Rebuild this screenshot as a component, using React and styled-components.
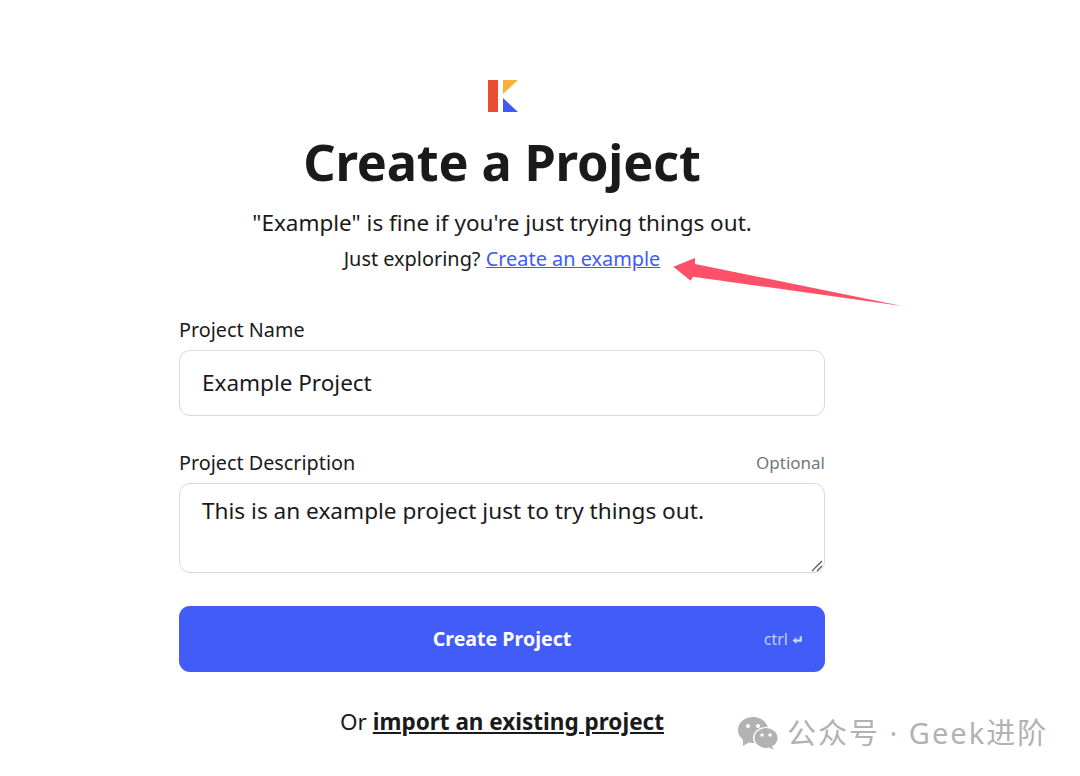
import React from "react";
import styled, { createGlobalStyle } from "styled-components";

const Global = createGlobalStyle`
  html, body { margin: 0; padding: 0; background: #fff; }
  body { font-family: "Noto Sans", "Open Sans", sans-serif; color: #1a1a1a; }
`;

const Page = styled.main`
  position: relative;
  width: 1080px;
  height: 776px;
  overflow: hidden;
  padding: 79px 0 0 179px;
  box-sizing: border-box;
`;

const Column = styled.div`
  width: 646px;
  display: flex;
  flex-direction: column;
`;

const Header = styled.header`
  display: flex;
  flex-direction: column;
  align-items: center;
`;

const Logo = styled.svg`
  display: block;
  width: 32px;
  height: 34px;
`;

const Title = styled.h1`
  margin: 15px 0 0;
  font-size: 50.5px;
  line-height: 68px;
  font-weight: 700;
  letter-spacing: -0.2px;
  color: #1a1a1a;
`;

const Subtitle = styled.p`
  margin: 12px 0 0;
  font-size: 22.5px;
  line-height: 30px;
`;

const Hint = styled.p`
  margin: 8px 0 0;
  font-size: 19.9px;
  line-height: 26px;
`;

const HintLink = styled.a`
  color: #3f5bf6;
  text-decoration: underline;
`;

const Field = styled.div`
  display: flex;
  flex-direction: column;
  margin-top: ${(p) => p.$top}px;
`;

const LabelRow = styled.div`
  display: flex;
  justify-content: space-between;
  align-items: flex-start;
  height: 26px;
  margin-bottom: 7px;
`;

const Label = styled.label`
  font-size: 19.8px;
  line-height: 26px;
`;

const Optional = styled.span`
  font-size: 17px;
  line-height: 26px;
  color: #6f7780;
`;

const Input = styled.input`
  box-sizing: border-box;
  width: 646px;
  height: 66px;
  padding: 0 22px 2px;
  border: 1px solid #d9d9d9;
  border-radius: 11px;
  font: 400 22.5px "Noto Sans", sans-serif;
  color: #1a1a1a;
  background: #fff;
  outline: none;
`;

const AreaWrap = styled.div`
  position: relative;
  height: 90px;
`;

const TextArea = styled.textarea`
  display: block;
  box-sizing: border-box;
  width: 646px;
  height: 90px;
  padding: 12px 22px;
  border: 1px solid #d9d9d9;
  border-radius: 11px;
  font: 400 22.6px/30px "Noto Sans", sans-serif;
  color: #1a1a1a;
  background: #fff;
  outline: none;
  resize: none;
`;

const Grip = styled.svg`
  position: absolute;
  right: 1px;
  bottom: 1px;
  width: 13px;
  height: 13px;
`;

const Submit = styled.button`
  position: relative;
  display: flex;
  align-items: center;
  justify-content: center;
  width: 646px;
  height: 66px;
  margin-top: 33px;
  padding: 0 0 2px;
  border: 0;
  border-radius: 11px;
  background: #415cf7;
  color: #fff;
  font: 700 19.6px "Noto Sans", sans-serif;
`;

const Shortcut = styled.span`
  position: absolute;
  right: 22px;
  top: 50%;
  transform: translateY(-50%);
  display: flex;
  align-items: center;
  gap: 4px;
  font-size: 16px;
  font-weight: 400;
  color: #c4cdfc;
`;

const Footer = styled.p`
  margin: 35px 0 0;
  text-align: center;
  font-size: 22.5px;
  line-height: 30px;
`;

const FooterLink = styled.a`
  font-weight: 700;
  color: #1a1a1a;
  text-decoration: underline;
`;

const Arrow = styled.svg`
  position: absolute;
  left: 670px;
  top: 255px;
  width: 235px;
  height: 55px;
`;

const Watermark = styled.div`
  position: absolute;
  left: 737px;
  top: 715px;
  display: flex;
  align-items: center;
  gap: 8px;
  font-family: "Noto Sans", "Noto Sans CJK SC", sans-serif;
  font-size: 29px;
  line-height: 36px;
  letter-spacing: 2px;
  color: #b2b2b2;
  white-space: nowrap;
`;

const Wechat = () => (
  <svg width="42" height="34" viewBox="0 0 42 34">
    <ellipse cx="16" cy="14" rx="15" ry="13" fill="#b2b2b2" />
    <path d="M6 22 L6 30 L14 25 Z" fill="#b2b2b2" />
    <circle cx="11" cy="10" r="2" fill="#fff" />
    <circle cx="21" cy="10" r="2" fill="#fff" />
    <ellipse cx="29" cy="22" rx="13" ry="11" fill="#fff" />
    <ellipse cx="29" cy="22" rx="11.5" ry="10" fill="#b2b2b2" />
    <path d="M34 29 L37 34 L31 31 Z" fill="#b2b2b2" />
    <circle cx="25" cy="19" r="1.7" fill="#fff" />
    <circle cx="33" cy="19" r="1.7" fill="#fff" />
  </svg>
);

export default function App() {
  return (
    <>
      <Global />
      <Page>
        <Column>
          <Header>
            <Logo viewBox="0 0 32 34">
              <rect x="2" y="1" width="10" height="32" fill="#e84e2f" />
              <path d="M17 1 H32 L17 15 Z" fill="#fbb03b" />
              <path d="M17 19 L32 33 H17 Z" fill="#3f5bf6" />
            </Logo>
            <Title>Create a Project</Title>
            <Subtitle>"Example" is fine if you're just trying things out.</Subtitle>
            <Hint>
              Just exploring? <HintLink href="#">Create an example</HintLink>
            </Hint>
          </Header>
          <Field $top={45}>
            <LabelRow>
              <Label>Project Name</Label>
            </LabelRow>
            <Input defaultValue="Example Project" />
          </Field>
          <Field $top={34}>
            <LabelRow>
              <Label>Project Description</Label>
              <Optional>Optional</Optional>
            </LabelRow>
            <AreaWrap>
              <TextArea defaultValue="This is an example project just to try things out." />
              <Grip viewBox="0 0 13 13">
                <path d="M1 12 L11 2 M6 12 L11 7" fill="none" stroke="#555" strokeWidth="1.2" />
              </Grip>
            </AreaWrap>
          </Field>
          <Submit>
            Create Project
            <Shortcut>
              ctrl
              <svg width="11" height="11" viewBox="0 0 10 10">
                <path d="M8 2 V6 H3" fill="none" stroke="#d0d7fd" strokeWidth="2" />
                <path d="M0.5 6 L4 3 V9 Z" fill="#d0d7fd" />
              </svg>
            </Shortcut>
          </Submit>
          <Footer>
            Or <FooterLink href="#">import an existing project</FooterLink>
          </Footer>
        </Column>
        <Arrow viewBox="670 255 235 55">
          <path d="M673.3 266.7 L695 258 L695 264 L902 306 L693 276.7 L690.7 280.7 Z" fill="#fe5068" />
        </Arrow>
        <Watermark>
          <Wechat />
          <span>公众号 · Geek进阶</span>
        </Watermark>
      </Page>
    </>
  );
}
